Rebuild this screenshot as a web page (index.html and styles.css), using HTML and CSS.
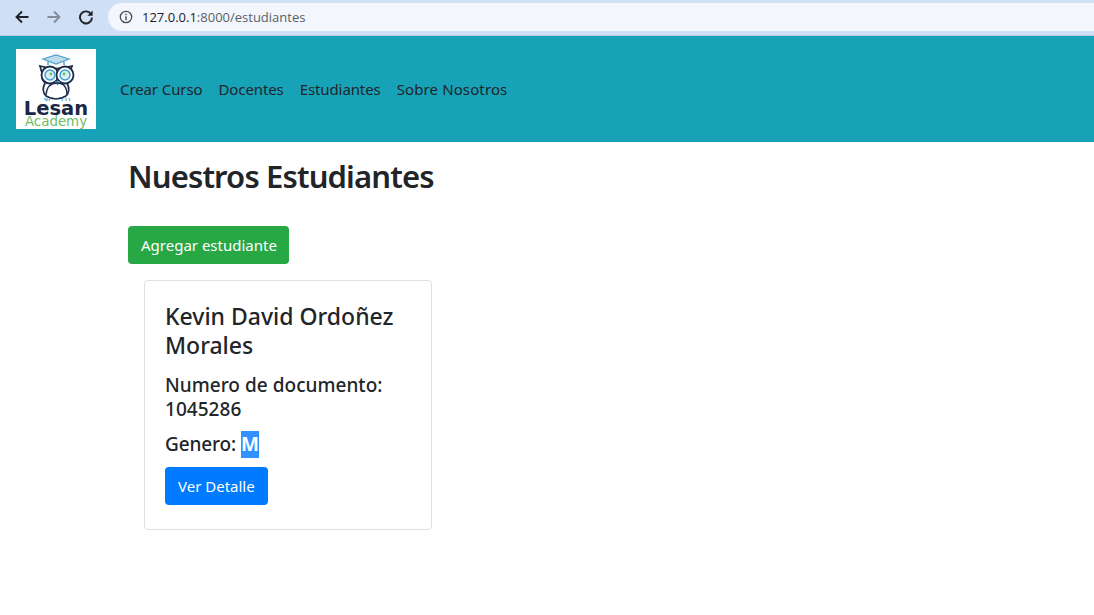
FILE: index.html
```html
<!DOCTYPE html>
<html lang="es">
<head>
<meta charset="utf-8">
<title>Estudiantes</title>
<link rel="stylesheet" href="styles.css">
</head>
<body>
<div class="chrome">
  <svg class="tb-icon" viewBox="0 0 16 16"><path d="M14.5 8H2.5M8 2.5L2.5 8 8 13.5" fill="none" stroke="#1f2329" stroke-width="1.9"/></svg>
  <svg class="tb-icon" viewBox="0 0 16 16"><path d="M1.5 8H13.5M8 2.5L13.5 8 8 13.5" fill="none" stroke="#858d99" stroke-width="1.9"/></svg>
  <svg class="tb-icon" viewBox="0 0 16 16"><path d="M13.2 5.4A6 6 0 1 0 14 8.6" fill="none" stroke="#1f2329" stroke-width="1.9"/><path d="M14.6 1.6V6.8H9.4Z" fill="#1f2329"/></svg>
  <div class="omnibox">
    <svg class="info" viewBox="0 0 14 14"><circle cx="7" cy="7" r="5.7" fill="none" stroke="#474b51" stroke-width="1.3"/><path d="M7 6.2V10.2M7 3.8V5.2" stroke="#474b51" stroke-width="1.4"/></svg>
    <span class="url"><span class="host">127.0.0.1</span>:8000/estudiantes</span>
  </div>
</div>
<nav class="navbar">
  <div class="brand">
    <svg class="logo" viewBox="0 0 80 80">
      <rect width="80" height="80" fill="#fff"/>
      <path d="M27 10L40 6 53 10 40 15Z" fill="#bcdcec" stroke="#4d9fc9" stroke-width="1.2"/>
      <path d="M32 12.5V16M48 12.5V16" stroke="#4d9fc9" stroke-width="1.4"/>
      <path d="M24 17Q40 22 56 17L54 24Q55 30 51 34Q55 42 50 47Q40 53 30 47Q25 42 29 34Q25 30 26 24Z" fill="#fff" stroke="#1e2b4a" stroke-width="1.7"/>
      <circle cx="34" cy="26" r="8.5" fill="#fff" stroke="#1e2b4a" stroke-width="1.8"/>
      <circle cx="49" cy="26" r="8.5" fill="#fff" stroke="#1e2b4a" stroke-width="1.8"/>
      <circle cx="34" cy="26" r="5" fill="#d5edf3" stroke="#3d9ccb" stroke-width="1.4"/>
      <circle cx="49" cy="26" r="5" fill="#d5edf3" stroke="#3d9ccb" stroke-width="1.4"/>
      <circle cx="35" cy="25" r="1.4" fill="#6cbf5e"/>
      <circle cx="48" cy="25" r="1.4" fill="#6cbf5e"/>
      <path d="M39 32L41.500 37 44 32Z" fill="#4d9fc9"/>
      <path d="M30 46Q31 34 41 34Q51 34 51 46" fill="none" stroke="#1e2b4a" stroke-width="1.4"/>
      <path d="M28 49L31 52M31 49V52M34 49L33 52M47 49L46 52M50 49V52M53 49L54 52" stroke="#6eb2d6" stroke-width="1.3"/>
      <text class="logo-main" x="40" y="66" text-anchor="middle">Lesan</text>
      <text class="logo-sub" x="40" y="77" text-anchor="middle">Academy</text>
    </svg>
  </div>
  <ul class="nav-links">
    <li><a href="#">Crear Curso</a></li>
    <li><a href="#">Docentes</a></li>
    <li><a href="#">Estudiantes</a></li>
    <li><a class="nav-wide" href="#">Sobre Nosotros</a></li>
  </ul>
</nav>
<main class="content">
  <h1 class="title">Nuestros Estudiantes</h1>
  <a class="btn btn-green" href="#">Agregar estudiante</a>
  <section class="card">
    <h3 class="name">Kevin David Ordoñez Morales</h3>
    <h5 class="line first">Numero de documento: 1045286</h5>
    <h5 class="line tight">Genero: <span class="selected">M</span></h5>
    <a class="btn btn-blue" href="#">Ver Detalle</a>
  </section>
</main>
</body>
</html>
```
FILE: styles.css
```css
* { box-sizing: border-box; }
html, body { margin: 0; padding: 0; }
body {
  width: 1094px;
  height: 615px;
  overflow: hidden;
  background: #fff;
  color: #212529;
  font-family: "Noto Sans", "Open Sans", sans-serif;
  font-size: 16px;
}
.chrome {
  height: 36px;
  background: #cedff6;
  border-bottom: 1px solid #b9cbe0;
  display: flex;
  align-items: center;
  padding: 0 0 1px 14px;
}
.tb-icon { width: 16px; height: 16px; margin-right: 16px; flex: none; }
.tb-icon:nth-child(3) { margin-right: 14px; }
.omnibox {
  flex: 1;
  height: 28px;
  background: #f3f6fc;
  border-radius: 14px 0 0 14px;
  display: flex;
  align-items: center;
  padding-left: 11px;
  gap: 9px;
}
.info { width: 14px; height: 14px; flex: none; }
.url { font-family: "Open Sans", sans-serif; font-size: 13px; color: #5a5f66; }
.host { color: #202124; }
.navbar {
  height: 106px;
  background: #17a2b8;
  display: flex;
  align-items: center;
  padding: 0 16px;
}
.brand { margin-right: 24px; display: flex; }
.logo { width: 80px; height: 80px; display: block; }
.logo-main { font-family: "DejaVu Sans", sans-serif; font-weight: 700; font-size: 19.5px; fill: #1a2745; }
.logo-sub { font-family: "DejaVu Sans", sans-serif; font-size: 13.4px; fill: #6dbd63; }
.nav-links { list-style: none; display: flex; gap: 16px; margin: 0; padding: 0; }
.nav-links a { color: #212529; text-decoration: none; font-size: 15px; line-height: 24px; letter-spacing: -.1px; }
.nav-links .nav-wide { letter-spacing: .12px; }
.content { padding: 13px 0 0 128px; }
.title {
  margin: 0 0 29px 0;
  font-size: 31px;
  font-weight: 600;
  line-height: 42px;
  letter-spacing: -.85px;
}
.btn {
  display: inline-block;
  height: 38px;
  line-height: 38px;
  padding: 0 13px;
  border-radius: 4px;
  color: #fff;
  text-decoration: none;
  font-size: 15px;
}
.btn-green { background: #28a745; width: 161px; white-space: nowrap; }
.btn-blue { background: #007bff; width: 103px; white-space: nowrap; }
.card {
  width: 288px;
  height: 250px;
  margin: 16px 0 0 16px;
  padding: 21px 20px 20px;
  border: 1px solid #dfdfdf;
  border-radius: 4px;
}
.name { margin: 0 0 13px; font-size: 23px; font-weight: 500; line-height: 29px; }
.line { margin: 0 0 9px; font-size: 19px; font-weight: 500; line-height: 24px; letter-spacing: .03px; }
.first { margin-bottom: 10px; }
.tight { letter-spacing: -.12px; }
.selected { background: #3390ff; color: #fff; display: inline-block; font-weight: 700; height: 27px; line-height: 27px; vertical-align: baseline; letter-spacing: 0; }
```
